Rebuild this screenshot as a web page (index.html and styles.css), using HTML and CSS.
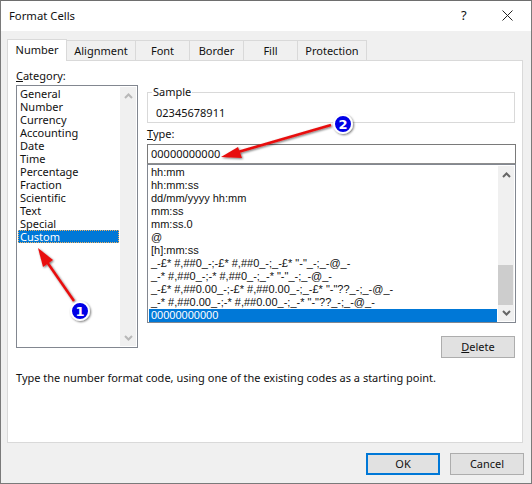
FILE: index.html
```html
<!DOCTYPE html>
<html lang="en">
<head>
  <meta charset="UTF-8" />
  <title>Format Cells</title>
  <link rel="stylesheet" href="styles.css">
</head>
<body>
  <div class="dialog">
    <div class="titlebar">
      <span class="title">Format Cells</span>
      <span class="help">?</span>
      <svg class="close" width="11" height="11" viewBox="0 0 11 11"><path d="M0.5 0.5 10.5 10.5M10.5 0.5 0.5 10.5" stroke="#222" fill="none"/></svg>
    </div>

    <div class="content">
      <div class="tabs">
        <span class="tab active">Number</span>
        <span class="tab">Alignment</span>
        <span class="tab">Font</span>
        <span class="tab">Border</span>
        <span class="tab">Fill</span>
        <span class="tab">Protection</span>
      </div>

      <div class="panel">
        <div class="columns">
          <div class="category">
            <div class="label"><u>C</u>ategory:</div>
            <div class="listbox category-list">
              <ul class="items">
                <li>General</li>
                <li>Number</li>
                <li>Currency</li>
                <li>Accounting</li>
                <li>Date</li>
                <li>Time</li>
                <li>Percentage</li>
                <li>Fraction</li>
                <li>Scientific</li>
                <li>Text</li>
                <li>Special</li>
                <li class="selected focused">Custom</li>
              </ul>
              <div class="scrollbar">
                <svg class="chev" width="9" height="6" viewBox="0 0 9 6"><path d="M1 5 4.5 1.5 8 5" stroke="#b8b8b8" stroke-width="2" fill="none"/></svg>
                <svg class="chev" width="9" height="6" viewBox="0 0 9 6"><path d="M1 1 4.5 4.5 8 1" stroke="#b8b8b8" stroke-width="2" fill="none"/></svg>
              </div>
            </div>
          </div>

          <div class="details">
            <fieldset class="sample">
              <legend>Sample</legend>
              <div class="sample-value">02345678911</div>
            </fieldset>
            <div class="label type-label"><u>T</u>ype:</div>
            <div class="type-input">00000000000</div>
            <div class="listbox type-list">
              <ul class="items codes">
                <li>hh:mm</li>
                <li>hh:mm:ss</li>
                <li>dd/mm/yyyy hh:mm</li>
                <li>mm:ss</li>
                <li>mm:ss.0</li>
                <li>@</li>
                <li>[h]:mm:ss</li>
                <li>_-£* #,##0_-;-£* #,##0_-;_-£* "-"_-;_-@_-</li>
                <li>_-* #,##0_-;-* #,##0_-;_-* "-"_-;_-@_-</li>
                <li>_-£* #,##0.00_-;-£* #,##0.00_-;_-£* "-"??_-;_-@_-</li>
                <li>_-* #,##0.00_-;-* #,##0.00_-;_-* "-"??_-;_-@_-</li>
                <li class="selected">00000000000</li>
              </ul>
              <div class="scrollbar">
                <svg class="chev" width="9" height="6" viewBox="0 0 9 6"><path d="M1 5 4.5 1.5 8 5" stroke="#666" stroke-width="2" fill="none"/></svg>
                <div class="thumb"></div>
                <svg class="chev" width="9" height="6" viewBox="0 0 9 6"><path d="M1 1 4.5 4.5 8 1" stroke="#666" stroke-width="2" fill="none"/></svg>
              </div>
            </div>
            <div class="delete-row">
              <span class="btn"><u>D</u>elete</span>
            </div>
          </div>
        </div>
        <p class="hint">Type the number format code, using one of the existing codes as a starting point.</p>
      </div>

      <div class="footer">
        <span class="btn default">OK</span>
        <span class="btn">Cancel</span>
      </div>
    </div>

    <!-- callouts drawn over the dialog -->
    <svg class="callouts" width="532" height="484" viewBox="0 0 532 484">
      <defs>
        <filter id="shadow" x="-30%" y="-30%" width="170%" height="170%">
          <feDropShadow dx="1" dy="1" stdDeviation="1.2" flood-color="#000" flood-opacity="0.55"/>
        </filter>
      </defs>
      <g filter="url(#shadow)">
        <path d="M74 301 47 262" stroke="#e81010" stroke-width="2.5" fill="none"/>
        <path d="M38 248 53 260 43 267Z" fill="#e81010"/>
        <path d="M331 125 238 152" stroke="#e81010" stroke-width="2.5" fill="none"/>
        <path d="M221 157 238 147 242 158Z" fill="#e81010"/>
      </g>
      <g filter="url(#shadow)">
        <circle cx="80" cy="311" r="9" fill="#0000e6" stroke="#fff" stroke-width="2"/>
        <circle cx="343" cy="124" r="9" fill="#0000e6" stroke="#fff" stroke-width="2"/>
      </g>
      <text class="badge-num" x="80" y="316">1</text>
      <text class="badge-num" x="343" y="129">2</text>
    </svg>
  </div>
</body>
</html>
```

FILE: styles.css
```css
* {
  margin: 0;
  padding: 0;
  box-sizing: border-box;
}

body {
  width: 532px;
  height: 484px;
  overflow: hidden;
  font-family: "Noto Sans", "Open Sans", sans-serif;
  font-size: 11px;
  color: #111;
  background: #f0f0f0;
}

ul {
  list-style: none;
}

.dialog {
  position: relative;
  width: 532px;
  height: 484px;
  display: flex;
  flex-direction: column;
  background: #f0f0f0;
  border: 1px solid #7a7a7a;
  border-top-color: #6e6e6e;
}

.titlebar {
  height: 30px;
  flex: none;
  background: #fff;
  display: flex;
  align-items: center;
  padding: 0 0 2px 8px;
}

.title {
  font-size: 11.3px;
  flex: 1;
}

.help {
  font-size: 13px;
  margin-right: 35px;
  width: 6px;
}

.close {
  margin-right: 18px;
}

.content {
  flex: 1;
  display: flex;
  flex-direction: column;
  padding: 8px 8px 0 6px;
}

.tabs {
  display: flex;
  height: 21px;
  align-items: flex-end;
  position: relative;
  z-index: 1;
}

.tab {
  height: 20px;
  width: 54px;
  display: flex;
  align-items: center;
  justify-content: center;
  border: 1px solid #d9d9d9;
  border-left: none;
  border-bottom: none;
  background: #f0f0f0;
  padding-bottom: 1px;
}

.tab:nth-child(2),
.tab:nth-child(6) {
  width: 69px;
}

.tab.active {
  width: 60px;
  height: 22px;
  background: #fff;
  border-left: 1px solid #d9d9d9;
  margin-bottom: -1px;
  padding-bottom: 3px;
}

.panel {
  height: 383px;
  background: #fff;
  border: 1px solid #d9d9d9;
  padding: 8px 6px 0 8px;
}

.columns {
  display: flex;
  gap: 9px;
}

.category {
  width: 122px;
}

.label {
  height: 14px;
  line-height: 14px;
}

.listbox {
  display: flex;
  background: #fff;
  border: 1px solid #828790;
  padding: 1px;
}

.category-list {
  height: 263px;
  margin-top: 2px;
}

.items {
  flex: 1;
  min-width: 0;
}

.items li {
  height: 13px;
  line-height: 13px;
  padding-left: 2px;
  white-space: nowrap;
}

.items li.selected {
  background: #0078d7;
  color: #fff;
}

.items li.focused {
  outline: 1px dotted #f0b060;
  outline-offset: -1px;
}

.scrollbar {
  width: 16px;
  flex: none;
  margin-left: 1px;
  background: #f0f0f0;
  display: flex;
  flex-direction: column;
  align-items: center;
  justify-content: space-between;
  padding: 6px 0 5px;
}

.details {
  width: 369px;
  padding-top: 17px;
}

.sample {
  height: 37px;
  width: 368px;
  border: 1px solid #d9d9d9;
  padding: 0 8px;
}

.sample legend {
  margin-left: -4px;
  padding: 0 1px;
  font-size: 11px;
  line-height: 12px;
}

.sample-value {
  height: 19px;
  line-height: 19px;
  margin-top: 5px;
}

.type-label {
  margin-top: 4px;
}

.type-input {
  height: 20px;
  margin-top: 3px;
  background: #fff;
  border: 1px solid #7a7a7a;
  border-bottom-color: #8e8e8e;
  padding-left: 3px;
  line-height: 18px;
}

.type-list {
  height: 159px;
}

.codes li {
  font-family: "Liberation Sans", sans-serif;
  font-size: 11px;
}

.type-list .scrollbar {
  position: relative;
}

.thumb {
  position: absolute;
  left: 0;
  right: 1px;
  top: 99px;
  height: 40px;
  background: #cdcdcd;
}

.delete-row {
  display: flex;
  justify-content: flex-end;
  margin-top: 13px;
}

.btn {
  width: 74px;
  height: 22px;
  display: flex;
  align-items: center;
  justify-content: center;
  background: #e1e1e1;
  border: 1px solid #adadad;
  padding-bottom: 1px;
}

.delete-row .btn {
  margin-right: 1px;
}

.hint {
  margin-top: 13px;
  line-height: 14px;
}

.footer {
  display: flex;
  justify-content: flex-end;
  gap: 10px;
  margin-top: 10px;
  margin-right: -1px;
}

.btn.default {
  border: 2px solid #0078d7;
}

.callouts {
  position: absolute;
  left: -1px;
  top: -1px;
  pointer-events: none;
}

.badge-num {
  font-family: "DejaVu Sans", sans-serif;
  font-size: 13px;
  font-weight: bold;
  fill: #fff;
  text-anchor: middle;
}
```
